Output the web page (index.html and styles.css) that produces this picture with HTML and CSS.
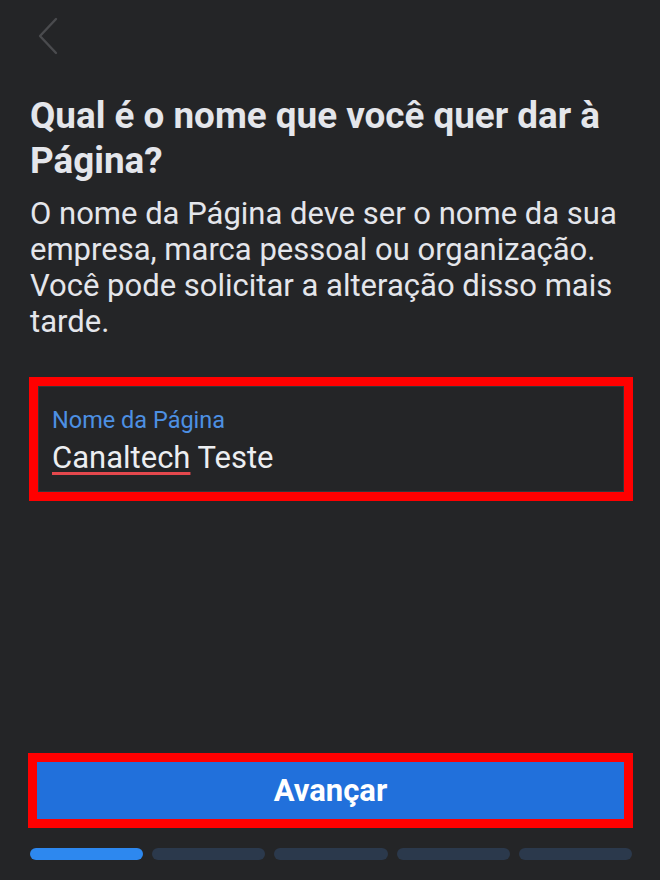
FILE: index.html
```html
<!DOCTYPE html>
<html lang="pt-BR">
<head>
<meta charset="utf-8">
<title>Nome da Página</title>
<link rel="stylesheet" href="styles.css">
</head>
<body>
<div class="screen">
  <div class="topbar">
    <svg class="back" width="22" height="38" viewBox="0 0 22 38" aria-hidden="true">
      <path d="M19 2 L3 19 L19 36" fill="none" stroke="#4a4b4e" stroke-width="2.4" stroke-linecap="round" stroke-linejoin="round"/>
    </svg>
  </div>
  <h1 class="title">Qual é o nome que você quer dar à Página?</h1>
  <p class="desc">O nome da Página deve ser o nome da sua empresa, marca pessoal ou organização. Você pode solicitar a alteração disso mais tarde.</p>
  <div class="mark field-mark">
    <div class="field">
      <div class="label">Nome da Página</div>
      <div class="value"><span class="spell">Canaltech</span> Teste</div>
    </div>
  </div>
  <div class="spacer"></div>
  <div class="mark btn-mark">
    <div class="btn">Avançar</div>
  </div>
  <div class="progress">
    <span class="seg active"></span>
    <span class="seg"></span>
    <span class="seg"></span>
    <span class="seg"></span>
    <span class="seg"></span>
  </div>
</div>
</body>
</html>
```
FILE: styles.css
```css
html, body {
  margin: 0;
  padding: 0;
  background: #242527;
}
body {
  font-family: Roboto, "Liberation Sans", sans-serif;
  color: #e4e6eb;
}
.screen {
  box-sizing: border-box;
  height: 880px;
  display: flex;
  flex-direction: column;
  padding: 0 27px 20px 29px;
}
.topbar {
  height: 93px;
  display: flex;
  align-items: flex-start;
}
.back {
  margin-top: 17px;
  margin-left: 8px;
}
.title {
  margin: 0 0 13px 1px;
  font-size: 36.8px;
  line-height: 45px;
  font-weight: 700;
  color: #e4e6eb;
}
.desc {
  margin: 0 0 37px 1px;
  font-size: 31px;
  line-height: 36px;
  font-weight: 400;
  color: #e4e6eb;
}
.mark {
  border: 9px solid #ff0000;
}
.field-mark {
  height: 124px;
  box-sizing: border-box;
}
.field {
  height: 100%;
  box-sizing: border-box;
  border: 1px solid #34363a;
  padding: 20px 14px 0 13px;
}
.label {
  font-size: 23.5px;
  line-height: 27px;
  color: #4d90e3;
}
.value {
  margin-top: 6px;
  font-size: 31px;
  line-height: 36px;
  color: #eceef1;
}
.spell {
  text-decoration: underline;
  text-decoration-color: #e5484d;
  text-decoration-thickness: 3px;
  text-underline-offset: 4px;
}
.spacer {
  flex: 1;
}
.btn-mark {
  margin-left: -1px;
  margin-right: 0;
}
.btn {
  height: 57px;
  background: #2170db;
  color: #ffffff;
  font-size: 31px;
  font-weight: 700;
  display: flex;
  align-items: center;
  justify-content: center;
}
.progress {
  margin-top: 20px;
  display: flex;
  gap: 9px;
  padding: 0 1px;
}
.seg {
  flex: 1;
  height: 12px;
  border-radius: 6px;
  background: #2b394c;
}
.seg.active {
  background: #2d88ef;
}
```
